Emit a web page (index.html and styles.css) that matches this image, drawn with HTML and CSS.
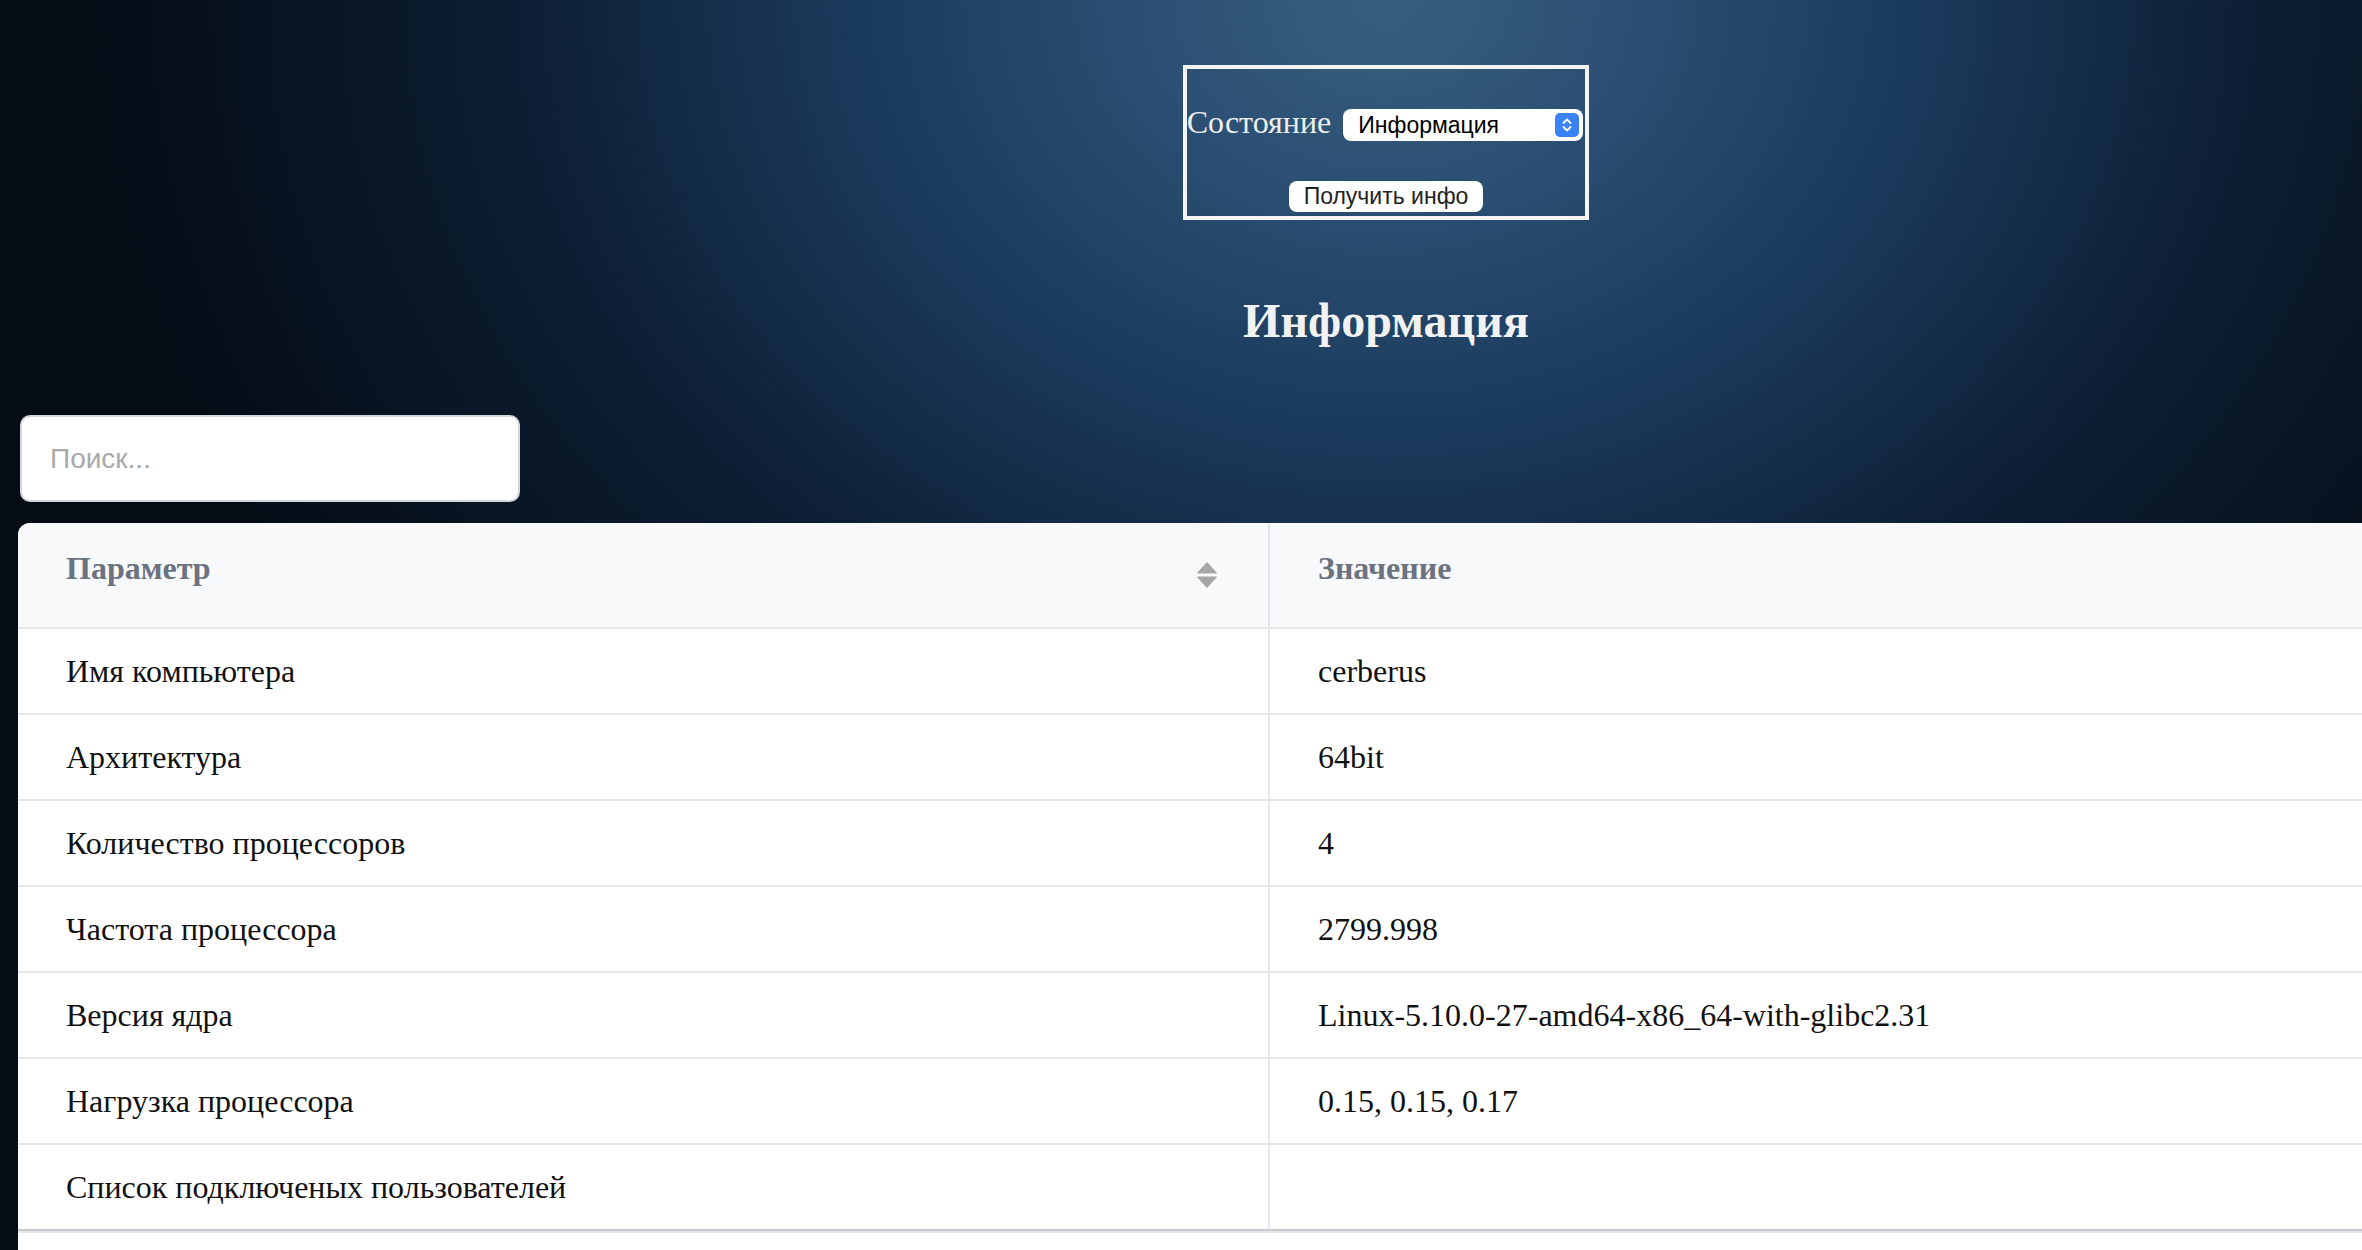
FILE: index.html
```html
<!DOCTYPE html>
<html lang="ru">
<head>
<meta charset="utf-8">
<title>Информация</title>
<link rel="stylesheet" href="styles.css">
</head>
<body>
<div class="page">
  <header class="top">
    <form class="state-form">
      <div class="state-row">
        <label class="state-label" for="state">Состояние</label>
        <span class="select-wrap">
          <select id="state" class="state-select">
            <option>Информация</option>
          </select>
          <svg class="select-arrows" width="24" height="24" viewBox="0 0 24 24" aria-hidden="true">
            <rect x="0" y="0" width="24" height="24" rx="5" fill="#3a82f7"/>
            <polyline points="8.5,10 12,6.5 15.5,10" fill="none" stroke="#fff" stroke-width="1.8" stroke-linecap="round" stroke-linejoin="round"/>
            <polyline points="8.5,14 12,17.5 15.5,14" fill="none" stroke="#fff" stroke-width="1.8" stroke-linecap="round" stroke-linejoin="round"/>
          </svg>
        </span>
      </div>
      <button type="button" class="get-btn">Получить инфо</button>
    </form>
    <h2 class="title">Информация</h2>
  </header>

  <div class="search">
    <input class="search-input" type="text" placeholder="Поиск...">
  </div>

  <div class="table-wrap">
    <table class="info-table">
      <colgroup>
        <col class="col-param">
        <col class="col-value">
      </colgroup>
      <thead>
        <tr>
          <th class="th-param">
            <div class="th-inner">
              <span>Параметр</span>
              <svg class="sort-icon" width="20" height="26" viewBox="0 0 20 26" aria-hidden="true">
                <path d="M10 0.5 L19.5 11 L0.5 11 Z" fill="#a6a6a6" stroke="#a6a6a6" stroke-width="1" stroke-linejoin="round"/>
                <path d="M0.5 15 L19.5 15 L10 25.5 Z" fill="#a6a6a6" stroke="#a6a6a6" stroke-width="1" stroke-linejoin="round"/>
              </svg>
            </div>
          </th>
          <th class="th-value">Значение</th>
        </tr>
      </thead>
      <tbody>
        <tr><td>Имя компьютера</td><td>cerberus</td></tr>
        <tr><td>Архитектура</td><td>64bit</td></tr>
        <tr><td>Количество процессоров</td><td>4</td></tr>
        <tr><td>Частота процессора</td><td>2799.998</td></tr>
        <tr><td>Версия ядра</td><td>Linux-5.10.0-27-amd64-x86_64-with-glibc2.31</td></tr>
        <tr><td>Нагрузка процессора</td><td>0.15, 0.15, 0.17</td></tr>
        <tr class="last"><td>Список подключеных пользователей</td><td></td></tr>
      </tbody>
    </table>
  </div>
</div>
</body>
</html>
```

FILE: styles.css
```css
html {
  background: #050c16;
}

body {
  margin: 0;
  overflow: hidden;
  min-height: 1250px;
  font-family: "Liberation Serif", "Times New Roman", serif;
  background:
    radial-gradient(ellipse 1300px 1060px at 1386px 0px,
      #385e7f 0%,
      #2b5073 18%,
      #1b3b5d 40%,
      #0c1d31 68%,
      #050c16 100%),
    #050c16;
}

.page {
  width: 2772px;
  padding-top: 65px;
}

/* ---------- top area ---------- */
.top {
  display: flex;
  flex-direction: column;
  align-items: center;
}

.state-form {
  display: flex;
  flex-direction: column;
  align-items: center;
  gap: 40px;
  border: 4px solid #f4f4f4;
  padding: 37px 0 4px;
  margin: 0;
}

.state-row {
  display: flex;
  align-items: baseline;
}

.state-label {
  font-family: "Liberation Serif", "Times New Roman", serif;
  font-size: 32px;
  line-height: 32px;
  color: #eeeeee;
  margin-right: 12px;
}

.select-wrap {
  position: relative;
  display: inline-block;
  margin-right: 2px;
}

.state-select {
  -webkit-appearance: none;
  appearance: none;
  display: block;
  width: 240px;
  height: 32px;
  margin: 0;
  border: none;
  border-radius: 8px;
  background: #ffffff;
  color: #000000;
  font-family: "Liberation Sans", Arial, sans-serif;
  font-size: 23px;
  padding: 0 40px 0 15px;
  outline: none;
}

.select-arrows {
  position: absolute;
  right: 4px;
  top: 4px;
  pointer-events: none;
}

.get-btn {
  height: 31px;
  padding: 0 15px;
  border: none;
  border-radius: 8px;
  background: #ffffff;
  color: #222222;
  font-family: "Liberation Sans", Arial, sans-serif;
  font-size: 23px;
  line-height: 31px;
}

.title {
  margin: 73px 0 0;
  font-family: "Liberation Serif", "Times New Roman", serif;
  font-weight: bold;
  font-size: 48px;
  color: #f2f2f2;
}

/* ---------- search ---------- */
.search {
  padding: 67px 0 0 20px;
}

.search-input {
  display: block;
  box-sizing: border-box;
  width: 500px;
  height: 87px;
  margin: 0;
  padding: 0 28px;
  border: 2px solid #d3d6db;
  border-radius: 10px;
  background: #ffffff;
  font-family: "Liberation Sans", Arial, sans-serif;
  font-size: 28px;
  color: #222;
  outline: none;
}

.search-input::placeholder {
  color: #a9a9a9;
}

/* ---------- table ---------- */
.table-wrap {
  margin: 21px 0 0 18px;
  padding-bottom: 60px;
  width: 2736px;
  border-radius: 12px 12px 0 0;
  overflow: hidden;
  background: #ffffff;
}

.info-table {
  width: 100%;
  table-layout: fixed;
  border-collapse: separate;
  border-spacing: 0;
  font-family: "Liberation Serif", "Times New Roman", serif;
  font-size: 32px;
  box-shadow: 0 2px 0 #e6e8ec;
}

.col-param {
  width: 1252px;
}

.info-table th,
.info-table td {
  box-sizing: border-box;
  text-align: left;
  vertical-align: top;
  line-height: 36px;
  border-bottom: 2px solid #e6e7eb;
}

.info-table th {
  background: #f8f9fb;
  color: #6b7280;
  font-weight: bold;
  padding: 27px 48px 39px;
}

.info-table td {
  color: #111111;
  padding: 24px 48px;
}

.info-table th:first-child,
.info-table td:first-child {
  border-right: 2px solid #e6e7eb;
}

.th-param {
  padding-right: 51px !important;
}

.th-inner {
  display: flex;
  justify-content: space-between;
  align-items: flex-start;
}

.sort-icon {
  display: block;
  margin-top: 12px;
}

.info-table tr.last td {
  border-bottom: 2px solid #c4c8cf;
}
```
